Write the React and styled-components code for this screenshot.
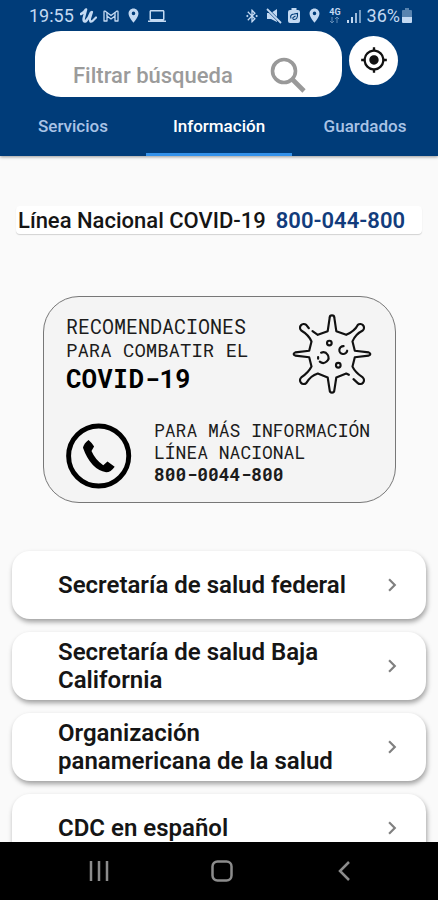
import React from 'react';
import styled, { createGlobalStyle } from 'styled-components';
import {
  MdBluetoothConnected,
  MdChevronRight,
  MdLaptop,
  MdLocationOn,
  MdMyLocation,
} from 'react-icons/md';

const GlobalStyle = createGlobalStyle`
  * {
    box-sizing: border-box;
  }
  body {
    margin: 0;
    font-family: Roboto, "Liberation Sans", sans-serif;
    background: #fafafa;
  }
`;

const Screen = styled.div`
  display: flex;
  flex-direction: column;
  height: 100vh;
  overflow: hidden;
`;

const Header = styled.header`
  flex: none;
  background: #003c79;
  box-shadow: 0 1px 3px rgba(0, 0, 0, 0.4);
`;

const StatusBar = styled.div`
  display: flex;
  justify-content: space-between;
  align-items: center;
  height: 31px;
  padding: 0 26px 0 29px;
  font-size: 18px;
  color: #c3d9f2;
`;

const StatusGroup = styled.div`
  display: flex;
  align-items: center;
  gap: 6px;
`;

const Network = styled.span`
  display: flex;
  flex-direction: column;
  align-items: center;
  font-size: 9px;
  font-weight: 700;
  line-height: 9px;
`;

const Battery = styled.span`
  display: flex;
  align-items: center;
  gap: 2px;
`;

const SearchRow = styled.div`
  display: flex;
  align-items: center;
  gap: 7px;
  padding: 0 40px 0 35px;
`;

const SearchBox = styled.label`
  flex: 1;
  display: flex;
  align-items: center;
  min-width: 0;
  height: 66px;
  padding: 22px 36px 0 38px;
  border-radius: 26px;
  background: #fff;
  color: #999;
`;

const SearchInput = styled.input`
  flex: 1;
  min-width: 0;
  padding: 0;
  border: none;
  outline: none;
  background: none;
  font-family: inherit;
  font-size: 22px;
  font-weight: 500;
  color: #333;

  &::placeholder {
    color: #9b9b9b;
    opacity: 1;
  }
`;

const LocateButton = styled.button`
  display: flex;
  align-items: center;
  justify-content: center;
  width: 49px;
  height: 49px;
  margin-bottom: 8px;
  padding: 0;
  border: none;
  border-radius: 50%;
  background: #fff;
  color: #111;
`;

const Tabs = styled.nav`
  display: grid;
  grid-template-columns: repeat(3, 1fr);
`;

const Tab = styled.button`
  height: 59px;
  padding: 2px 0 0;
  border: none;
  border-bottom: 3px solid ${(props) => (props.$active ? '#3391ea' : 'transparent')};
  background: none;
  font-family: inherit;
  font-size: 17px;
  font-weight: 500;
  color: ${(props) => (props.$active ? '#fff' : '#a9c3e6')};
`;

const Main = styled.main`
  flex: 1;
  min-height: 0;
  overflow: hidden;
  padding: 50px 12px 0;
`;

const Hotline = styled.p`
  display: flex;
  align-items: center;
  gap: 10px;
  height: 28px;
  margin: 0 4px;
  padding: 0 2px;
  border-radius: 4px;
  background: #fff;
  box-shadow: 0 1px 1px rgba(0, 0, 0, 0.16);
  font-size: 22px;
  font-weight: 500;
  white-space: nowrap;
  color: #151515;
`;

const HotlineNumber = styled.a`
  font-weight: 600;
  color: #123c7c;
  text-decoration: none;
`;

const Banner = styled.section`
  display: flex;
  flex-direction: column;
  gap: 25px;
  margin: 62px 30px 48px 31px;
  padding: 17px 23px 13px 22px;
  border: 1px solid #777;
  border-radius: 36px;
  background: #f4f4f4;
  font-family: "Roboto Mono", "DejaVu Sans Mono", monospace;
  color: #1c1c1c;
`;

const BannerTop = styled.div`
  display: flex;
  justify-content: space-between;
`;

const BannerBottom = styled.div`
  display: flex;
  align-items: flex-end;
  gap: 22px;
`;

const BannerLine = styled.span`
  display: block;
  font-size: ${(props) => props.$size}px;
  line-height: 24px;
  white-space: nowrap;
`;

const BannerTitle = styled.strong`
  display: block;
  font-size: 26px;
  line-height: 32px;
  color: #000;
`;

const BannerContact = styled.p`
  margin: 0;
  padding-bottom: 4px;
  font-size: 18px;
  line-height: 22px;
  white-space: nowrap;
`;

const List = styled.ul`
  display: flex;
  flex-direction: column;
  gap: 13px;
  margin: 0;
  padding: 0;
  list-style: none;
`;

const ItemLink = styled.a`
  display: flex;
  align-items: center;
  justify-content: space-between;
  gap: 30px;
  min-height: 68px;
  padding: 6px 21px 6px 46px;
  border-radius: 18px;
  background: #fff;
  box-shadow: 1px 3px 5px rgba(0, 0, 0, 0.36);
  font-size: 24px;
  font-weight: 600;
  line-height: 28px;
  color: #151515;
  text-decoration: none;

  svg {
    flex: none;
    color: #808080;
  }
`;

const BottomBar = styled.nav`
  flex: none;
  display: flex;
  justify-content: space-between;
  align-items: center;
  height: 58px;
  padding: 0 76px 0 81px;
  background: #000;
`;

const NavButton = styled.button`
  display: flex;
  align-items: center;
  justify-content: center;
  width: 36px;
  height: 36px;
  padding: 0;
  border: none;
  background: none;
  color: #8c8c8c;
`;

const BrushIcon = () => (
  <svg width="17" height="16" viewBox="0 0 17 16" fill="none" stroke="currentColor" strokeLinecap="round" strokeLinejoin="round">
    <path d="M1 6 Q4 5 6 1.500 L3.800 10 Q3 14.500 6 13 Q9 10 11 4.500" strokeWidth="2.600" />
    <path d="M12 4 L10 10.500 Q9.500 15 12.500 13 L16 9.500" strokeWidth="2.200" />
  </svg>
);

const MailIcon = () => (
  <svg width="16" height="12" viewBox="0 0 16 12" fill="none" stroke="currentColor" strokeWidth="1.3" strokeLinejoin="round">
    <path d="M1 11 V2 Q1 0.700 2.300 1.200 L8 5.500 L13.700 1.200 Q15 0.700 15 2 V11 H12 V6 L8 9 L4 6 V11 Z" />
    <path d="M4 2.500 V6 M12 2.500 V6" />
  </svg>
);

const MuteIcon = () => (
  <svg width="16" height="16" viewBox="0 0 16 16" fill="currentColor">
    <path d="M1 5 H5 L11 1 V14 L5 11 H1 Z" />
    <path d="M1 1 L15 15" stroke="#003c79" strokeWidth="3" />
    <path d="M1 1 L15 15" stroke="currentColor" strokeWidth="1.800" />
  </svg>
);

const BatterySaverIcon = () => (
  <svg width="12" height="15" viewBox="0 0 12 15">
    <path d="M3.500 0 H8.500 V2 H10 Q12 2 12 4 V13 Q12 15 10 15 H2 Q0 15 0 13 V4 Q0 2 2 2 H3.500 Z" fill="currentColor" />
    <path d="M3 10.500 Q1.500 6.500 6 6 L9.500 5.500 Q10 11.500 6 11.500 Q4.500 11.500 5 9.500 L7.500 8" fill="none" stroke="#003c79" strokeWidth="1.100" />
  </svg>
);

const DataArrows = () => (
  <svg width="11" height="6" viewBox="0 0 11 6" fill="none" stroke="currentColor" opacity="0.5">
    <path d="M3 0 V6 M1 4 L3 6 L5 4 M8 6 V0 M6 2 L8 0 L10 2" />
  </svg>
);

const SignalIcon = () => (
  <svg width="14" height="14" viewBox="0 0 14 14" fill="currentColor">
    <rect x="0" y="11" width="2" height="3" />
    <rect x="4" y="8" width="2" height="6" />
    <rect x="8" y="4" width="2" height="10" opacity="0.8" />
    <rect x="12" y="1" width="2" height="13" opacity="0.6" />
  </svg>
);

const BatteryIcon = () => (
  <svg width="10" height="15" viewBox="0 0 10 15" fill="currentColor">
    <path d="M3 0 H7 V2 H9 Q10 2 10 3 V9 H0 V3 Q0 2 1 2 H3 Z" opacity="0.45" />
    <path d="M0 9 H10 V14 Q10 15 9 15 H1 Q0 15 0 14 Z" />
  </svg>
);

const SearchIcon = () => (
  <svg width="36" height="36" viewBox="0 0 36 36" fill="none" stroke="currentColor">
    <circle cx="14" cy="14" r="11.500" strokeWidth="3.600" />
    <path d="M22.500 22.500 L34 34" strokeWidth="4.600" />
  </svg>
);

const VirusIcon = () => (
  <svg width="80" height="80" viewBox="215 87 240 242" fill="none" stroke="#111" strokeWidth="6.500" strokeLinecap="round" strokeLinejoin="round">
    <path d="M276 139 L292 150 L322 139 L328 98 Q328 91 335 91 Q342 91 342 98 L348 139 L378 150 Q404 138 413 120 A11 11 0 1 1 428 137 Q406 148 397 170 L404 198 L446 203 Q456 208 446 213 L404 218 L397 246 Q404 262 428 279 A11 11 0 1 1 413 296 L400 284" />
    <path d="M386 271 L378 267 L348 279 L342 318 Q342 325 335 325 Q328 325 328 318 L322 279 L292 267 Q270 274 257 296 A11 11 0 1 1 242 279 Q264 264 273 246 L266 218 L224 213 Q214 208 224 203 L266 198 L273 170 Q264 150 242 137 A11 11 0 1 1 257 120 L265 130" />
    <circle cx="327" cy="175" r="7" />
    <circle cx="354" cy="242" r="7" />
    <path d="M370 184 A12 12 0 1 0 381 198" />
    <path d="M302 204 A16 16 0 1 1 298 231 M293 222 V217" />
  </svg>
);

const PhoneIcon = () => (
  <svg width="66" height="66" viewBox="105 412 202 202">
    <circle cx="205" cy="513" r="92" fill="none" stroke="#000" strokeWidth="15" />
    <path d="M157 488 Q160 474 174 464 Q184 472 191 484 L183 498 Q195 526 219 541 L232 530 L254 546 Q242 563 228 563 Q181 555 157 488 Z" fill="#000" />
  </svg>
);

const tabs = ['Servicios', 'Información', 'Guardados'];

const links = [
  'Secretaría de salud federal',
  'Secretaría de salud Baja California',
  'Organización panamericana de la salud',
  'CDC en español',
];

function App() {
  return (
    <Screen>
      <GlobalStyle />
      <Header>
        <StatusBar>
          <StatusGroup>
            <span>19:55</span>
            <BrushIcon />
            <MailIcon />
            <MdLocationOn size={17} />
            <MdLaptop size={18} />
          </StatusGroup>
          <StatusGroup>
            <MdBluetoothConnected size={16} />
            <MuteIcon />
            <BatterySaverIcon />
            <MdLocationOn size={17} />
            <Network>
              4G
              <DataArrows />
            </Network>
            <SignalIcon />
            <Battery>
              36%
              <BatteryIcon />
            </Battery>
          </StatusGroup>
        </StatusBar>
        <SearchRow>
          <SearchBox>
            <SearchInput type="text" placeholder="Filtrar búsqueda" aria-label="Filtrar búsqueda" />
            <SearchIcon />
          </SearchBox>
          <LocateButton type="button" aria-label="Mi ubicación">
            <MdMyLocation size={28} />
          </LocateButton>
        </SearchRow>
        <Tabs>
          {tabs.map((tab) => (
            <Tab key={tab} type="button" $active={tab === 'Información'}>
              {tab}
            </Tab>
          ))}
        </Tabs>
      </Header>

      <Main>
        <Hotline>
          Línea Nacional COVID-19
          <HotlineNumber href="tel:800044800">800-044-800</HotlineNumber>
        </Hotline>

        <Banner>
          <BannerTop>
            <div>
              <BannerLine $size={20}>RECOMENDACIONES</BannerLine>
              <BannerLine $size={19}>PARA COMBATIR EL</BannerLine>
              <BannerTitle>COVID-19</BannerTitle>
            </div>
            <VirusIcon />
          </BannerTop>
          <BannerBottom>
            <PhoneIcon />
            <BannerContact>
              PARA MÁS INFORMACIÓN
              <br />
              LÍNEA NACIONAL
              <br />
              <strong>800-0044-800</strong>
            </BannerContact>
          </BannerBottom>
        </Banner>

        <List>
          {links.map((link) => (
            <li key={link}>
              <ItemLink href="#">
                {link}
                <MdChevronRight size={26} />
              </ItemLink>
            </li>
          ))}
        </List>
      </Main>

      <BottomBar>
        <NavButton type="button" aria-label="Recientes">
          <svg width="20" height="20" viewBox="0 0 20 20" stroke="currentColor" strokeWidth="2.500">
            <path d="M2 0 V20 M10 0 V20 M18 0 V20" />
          </svg>
        </NavButton>
        <NavButton type="button" aria-label="Inicio">
          <svg width="22" height="22" viewBox="0 0 22 22" fill="none" stroke="currentColor" strokeWidth="2.500">
            <rect x="1.500" y="1.500" width="19" height="19" rx="5" />
          </svg>
        </NavButton>
        <NavButton type="button" aria-label="Atrás">
          <svg width="12" height="20" viewBox="0 0 12 20" fill="none" stroke="currentColor" strokeWidth="2.500">
            <path d="M11 1 L2 10 L11 19" />
          </svg>
        </NavButton>
      </BottomBar>
    </Screen>
  );
}

export default App;
